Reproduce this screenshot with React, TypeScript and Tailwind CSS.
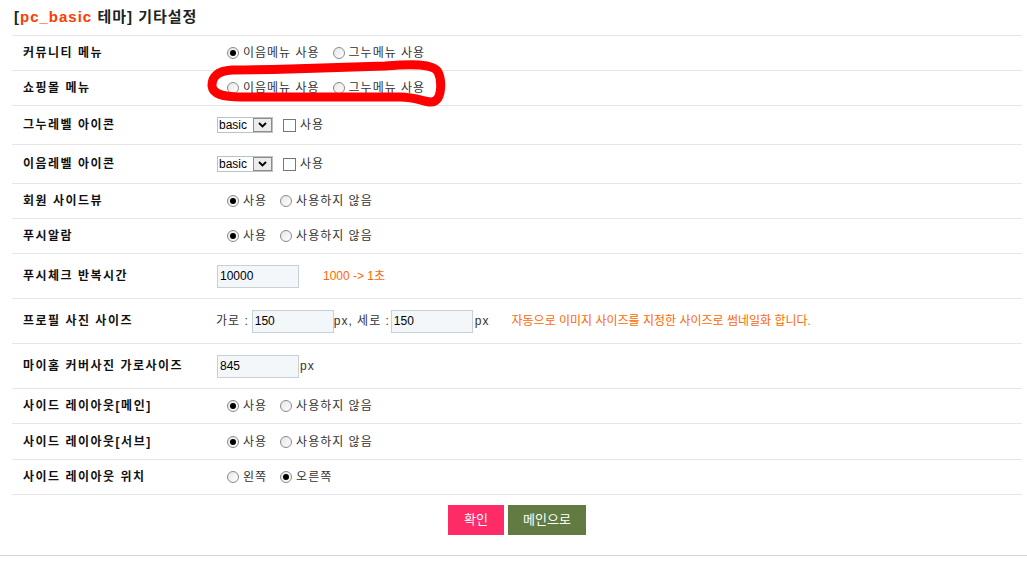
import React from "react";

const FONT = "font-['Liberation_Sans','Noto_Sans_CJK_KR',sans-serif]";

function Radio({ checked }: { checked?: boolean }) {
  return (
    <span className="flex h-[12px] w-[12px] shrink-0 items-center justify-center rounded-full border border-[#8a8a8a] bg-gradient-to-br from-[#e6e6e6] to-white">
      {checked && <span className="h-[6px] w-[6px] rounded-full bg-black" />}
    </span>
  );
}

function RadioGroup({ options, selected }: { options: string[]; selected: number }) {
  return (
    <div className="ml-[11px] flex items-center">
      {options.map((o, i) => (
        <label key={i} className="mr-[13px] flex items-center gap-[4px] text-[12px] tracking-[1px] text-[#333]">
          <Radio checked={i === selected} />
          <span className="leading-none">{o}</span>
        </label>
      ))}
    </div>
  );
}

function LevelSelect() {
  return (
    <div className="ml-[1px] flex items-center">
      <div className="flex h-[16px] w-[56px] items-stretch border border-[#b8c3c8] bg-white">
        <span className="flex-1 pl-[1px] text-[12px] leading-[14px] text-black">basic</span>
        <span className="flex w-[19px] items-center justify-center border border-[#8d8d8d] bg-[#ececec]">
          <svg width="9" height="6" viewBox="0 0 9 6">
            <path d="M1 1 L4.5 4.5 L8 1" fill="none" stroke="#000" strokeWidth="1.8" />
          </svg>
        </span>
      </div>
      <span className="ml-[10px] h-[13px] w-[13px] border border-[#777] bg-white" />
      <span className="ml-[4px] text-[12px] tracking-[1px] text-[#333]">사용</span>
    </div>
  );
}

function TextBox({ value, w = 82 }: { value: string; w?: number }) {
  return (
    <span
      className="flex h-[23px] shrink-0 items-center border border-[#c6d1d6] bg-[#f3f7f9] pl-[2px] text-[12px] tracking-normal text-black"
      style={{ width: w }}
    >
      {value}
    </span>
  );
}

function Row({ label, h, children }: { label: string; h: number; children: React.ReactNode }) {
  return (
    <div className="flex items-center border-b border-[#e6e6e6]" style={{ height: h }}>
      <div className="w-[204px] shrink-0 pl-[11px] text-[12px] font-bold tracking-[1.5px] text-[#111]">{label}</div>
      <div className="flex flex-1 items-center">{children}</div>
    </div>
  );
}

export default function App() {
  const useNo = ["사용", "사용하지 않음"];
  return (
    <div className={`relative h-[561px] w-[1027px] overflow-hidden bg-white ${FONT}`}>
      <h1 className="h-[35px] pl-[14px] pt-[6px] text-[15px] font-bold tracking-[1px] text-[#222]">
        [<span className="text-[#ff3c00]">pc_basic</span> 테마] 기타설정
      </h1>

      <div className="mx-[12px] w-[1010px] border-t border-[#e6e6e6]">
        <Row label="커뮤니티 메뉴" h={35}>
          <RadioGroup options={["이음메뉴 사용", "그누메뉴 사용"]} selected={0} />
        </Row>
        <Row label="쇼핑몰 메뉴" h={35}>
          <RadioGroup options={["이음메뉴 사용", "그누메뉴 사용"]} selected={-1} />
        </Row>
        <Row label="그누레벨 아이콘" h={39}>
          <LevelSelect />
        </Row>
        <Row label="이음레벨 아이콘" h={39}>
          <LevelSelect />
        </Row>
        <Row label="회원 사이드뷰" h={35}>
          <RadioGroup options={useNo} selected={0} />
        </Row>
        <Row label="푸시알람" h={35}>
          <RadioGroup options={useNo} selected={0} />
        </Row>
        <Row label="푸시체크 반복시간" h={45}>
          <div className="ml-[1px] flex items-center">
            <TextBox value="10000" />
            <span className="ml-[24px] text-[12px] text-[#ff6600]">1000 -&gt; 1초</span>
          </div>
        </Row>
        <Row label="프로필 사진 사이즈" h={45}>
          <div className="flex items-center text-[12px] tracking-[1px] text-[#333]">
            <span className="mr-[3px]">가로 :</span>
            <TextBox value="150" />
            <span className="mr-[1px]">px, 세로 :</span>
            <TextBox value="150" />
            <span className="ml-[2px]">px</span>
            <span className="ml-[22px] tracking-normal text-[#ff6600]">
              자동으로 이미지 사이즈를 지정한 사이즈로 썸네일화 합니다.
            </span>
          </div>
        </Row>
        <Row label="마이홈 커버사진 가로사이즈" h={45}>
          <div className="ml-[1px] flex items-center text-[12px] tracking-[1px] text-[#333]">
            <TextBox value="845" />
            <span className="ml-[1px]">px</span>
          </div>
        </Row>
        <Row label="사이드 레이아웃[메인]" h={35}>
          <RadioGroup options={useNo} selected={0} />
        </Row>
        <Row label="사이드 레이아웃[서브]" h={36}>
          <RadioGroup options={useNo} selected={0} />
        </Row>
        <Row label="사이드 레이아웃 위치" h={35}>
          <RadioGroup options={["왼쪽", "오른쪽"]} selected={1} />
        </Row>

        <div className="flex h-[60px] justify-center gap-[4px] pt-[10px]">
          <button className="h-[30px] w-[56px] bg-[#ff2b67] text-[13px] text-white">확인</button>
          <button className="h-[30px] w-[78px] bg-[#627b42] text-[13px] text-white">메인으로</button>
        </div>
      </div>
      <div className="border-t border-[#d6d6d6]" />

      {/* red marker circle over the shopping mall row */}
      <svg className="pointer-events-none absolute left-0 top-0" width="1027" height="561">
        <path
          d="M232 70 C216 71 212 78 212 86 C213 94 222 97 242 97 L400 97 C420 97 428 105 435 101 C442 97 442 80 438 72 C433 63 410 64 385 66 L290 69 C262 70 244 70 232 70 Z"
          fill="none"
          stroke="#ff0000"
          strokeWidth="9"
          strokeLinejoin="round"
        />
      </svg>
    </div>
  );
}
